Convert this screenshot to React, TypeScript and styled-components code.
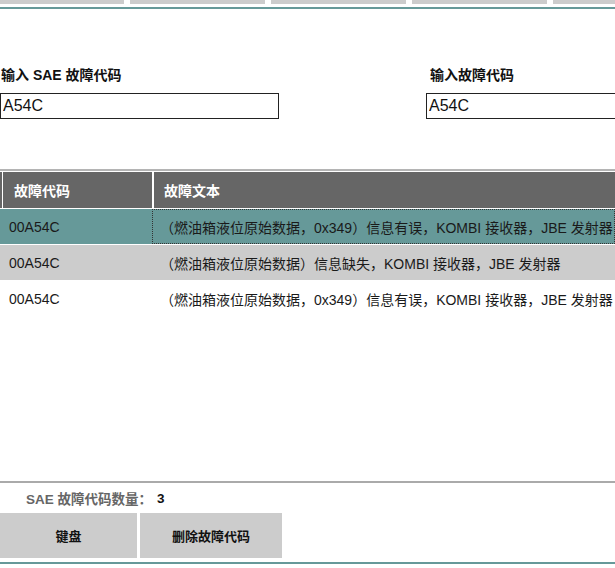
import React from 'react';
import styled, { createGlobalStyle } from 'styled-components';

const GlobalStyle = createGlobalStyle`
  html, body {
    margin: 0;
    padding: 0;
    background: #fff;
    overflow: hidden;
  }
  body {
    font-family: "Liberation Sans", "Noto Sans CJK SC", sans-serif;
    color: #222;
  }
`;

const Page = styled.div`
  width: 615px;
  height: 568px;
  display: flex;
  flex-direction: column;
  overflow: hidden;
`;

const TabStrip = styled.div`
  display: flex;
  gap: 6px;
  height: 4px;
  flex-shrink: 0;
`;

const Tab = styled.div<{ w: number }>`
  width: ${p => p.w}px;
  flex-shrink: 0;
  background: #cccccc;
`;

const Rule = styled.div<{ color: string; top?: number }>`
  height: 2px;
  flex-shrink: 0;
  margin-top: ${p => p.top ?? 0}px;
  background: ${p => p.color};
`;

const FormRow = styled.div`
  display: flex;
  margin-top: 58px;
  flex-shrink: 0;
`;

const Field = styled.div<{ offset?: number }>`
  display: flex;
  flex-direction: column;
  width: 279px;
  flex-shrink: 0;
  margin-left: ${p => p.offset ?? 0}px;
`;

const Label = styled.label<{ indent?: number }>`
  font-size: 14px;
  font-weight: bold;
  line-height: 17px;
  height: 17px;
  color: #111;
  padding-left: ${p => p.indent ?? 1}px;
  margin-bottom: 9px;
  white-space: nowrap;
`;

const TextInput = styled.input`
  box-sizing: border-box;
  width: 279px;
  height: 26px;
  margin: 0;
  padding: 0 2px;
  border: 1px solid #222;
  border-radius: 0;
  font-family: "Liberation Sans", sans-serif;
  font-size: 16px;
  color: #111;
  background: #fff;
  outline: none;
`;

const TableArea = styled.div`
  flex: 1;
  margin-top: 50px;
  border-top: 2px solid #b4b4b4;
  display: flex;
  flex-direction: column;
  gap: 1px;
  padding-top: 1px;
  min-height: 0;
`;

const HeaderRow = styled.div`
  display: flex;
  height: 36px;
  background: #666666;
  padding-left: 2px;
  flex-shrink: 0;
`;

const HeaderCell = styled.div<{ w?: number; border: number; pad: number }>`
  box-sizing: border-box;
  display: flex;
  align-items: center;
  ${p => (p.w ? `width: ${p.w}px; flex-shrink: 0;` : 'flex: 1;')}
  border-left: ${p => p.border}px solid #fff;
  padding-left: ${p => p.pad}px;
  font-size: 14px;
  font-weight: bold;
  color: #fff;
  white-space: nowrap;
`;

const Row = styled.div<{ tone: 'teal' | 'grey' | 'white' }>`
  display: flex;
  height: 35px;
  flex-shrink: 0;
  background: ${p => (p.tone === 'teal' ? '#669999' : p.tone === 'grey' ? '#cccccc' : '#ffffff')};
`;

const CodeCell = styled.div`
  width: 152px;
  flex-shrink: 0;
  box-sizing: border-box;
  padding-left: 9px;
  display: flex;
  align-items: center;
  font-size: 14px;
  color: #1a1a1a;
`;

const TextCell = styled.div<{ focused?: boolean }>`
  flex: 1;
  box-sizing: border-box;
  padding-left: 8px;
  display: flex;
  align-items: center;
  font-size: 14px;
  color: #1a1a1a;
  white-space: nowrap;
  overflow: hidden;
  outline: ${p => (p.focused ? '1px dotted #333' : 'none')};
  outline-offset: -1px;
`;

const Footer = styled.div`
  flex-shrink: 0;
  display: flex;
  flex-direction: column;
`;

const CountLine = styled.div`
  height: 30px;
  display: flex;
  align-items: center;
  padding-left: 26px;
  font-size: 13.5px;
  font-weight: bold;
  color: #666;
`;

const CountValue = styled.span`
  color: #111;
  margin-left: 5px;
`;

const ButtonBar = styled.div`
  display: flex;
  gap: 3px;
  height: 45px;
`;

const ActionButton = styled.button<{ w: number }>`
  width: ${p => p.w}px;
  height: 45px;
  margin: 0;
  padding: 0;
  border: none;
  border-radius: 0;
  background: #cccccc;
  font-family: "Liberation Sans", "Noto Sans CJK SC", sans-serif;
  font-size: 13px;
  font-weight: bold;
  color: #111;
`;

const faults = [
  { code: '00A54C', text: '（燃油箱液位原始数据，0x349）信息有误，KOMBI 接收器，JBE 发射器' },
  { code: '00A54C', text: '（燃油箱液位原始数据）信息缺失，KOMBI 接收器，JBE 发射器' },
  { code: '00A54C', text: '（燃油箱液位原始数据，0x349）信息有误，KOMBI 接收器，JBE 发射器' },
];

const tones: Array<'teal' | 'grey' | 'white'> = ['teal', 'grey', 'white'];

export default function App() {
  return (
    <Page>
      <GlobalStyle />
      <TabStrip>
        <Tab w={124} />
        <Tab w={135} />
        <Tab w={135} />
        <Tab w={135} />
        <Tab w={135} />
      </TabStrip>
      <Rule color="#669999" top={3} />

      <FormRow>
        <Field>
          <Label>输入 SAE 故障代码</Label>
          <TextInput defaultValue="A54C" />
        </Field>
        <Field offset={147}>
          <Label indent={4}>输入故障代码</Label>
          <TextInput defaultValue="A54C" />
        </Field>
      </FormRow>

      <TableArea>
        <HeaderRow>
          <HeaderCell w={150} border={1} pad={11}>故障代码</HeaderCell>
          <HeaderCell border={2} pad={10}>故障文本</HeaderCell>
        </HeaderRow>
        {faults.map((f, i) => (
          <Row key={i} tone={tones[i]}>
            <CodeCell>{f.code}</CodeCell>
            <TextCell focused={i === 0}>{f.text}</TextCell>
          </Row>
        ))}
      </TableArea>

      <Footer>
        <Rule color="#aaaaaa" />
        <CountLine>
          SAE 故障代码数量：<CountValue>3</CountValue>
        </CountLine>
        <ButtonBar>
          <ActionButton w={137}>键盘</ActionButton>
          <ActionButton w={142}>删除故障代码</ActionButton>
        </ButtonBar>
        <Rule color="#669999" top={4} />
        <div style={{ height: 4 }} />
      </Footer>
    </Page>
  );
}
